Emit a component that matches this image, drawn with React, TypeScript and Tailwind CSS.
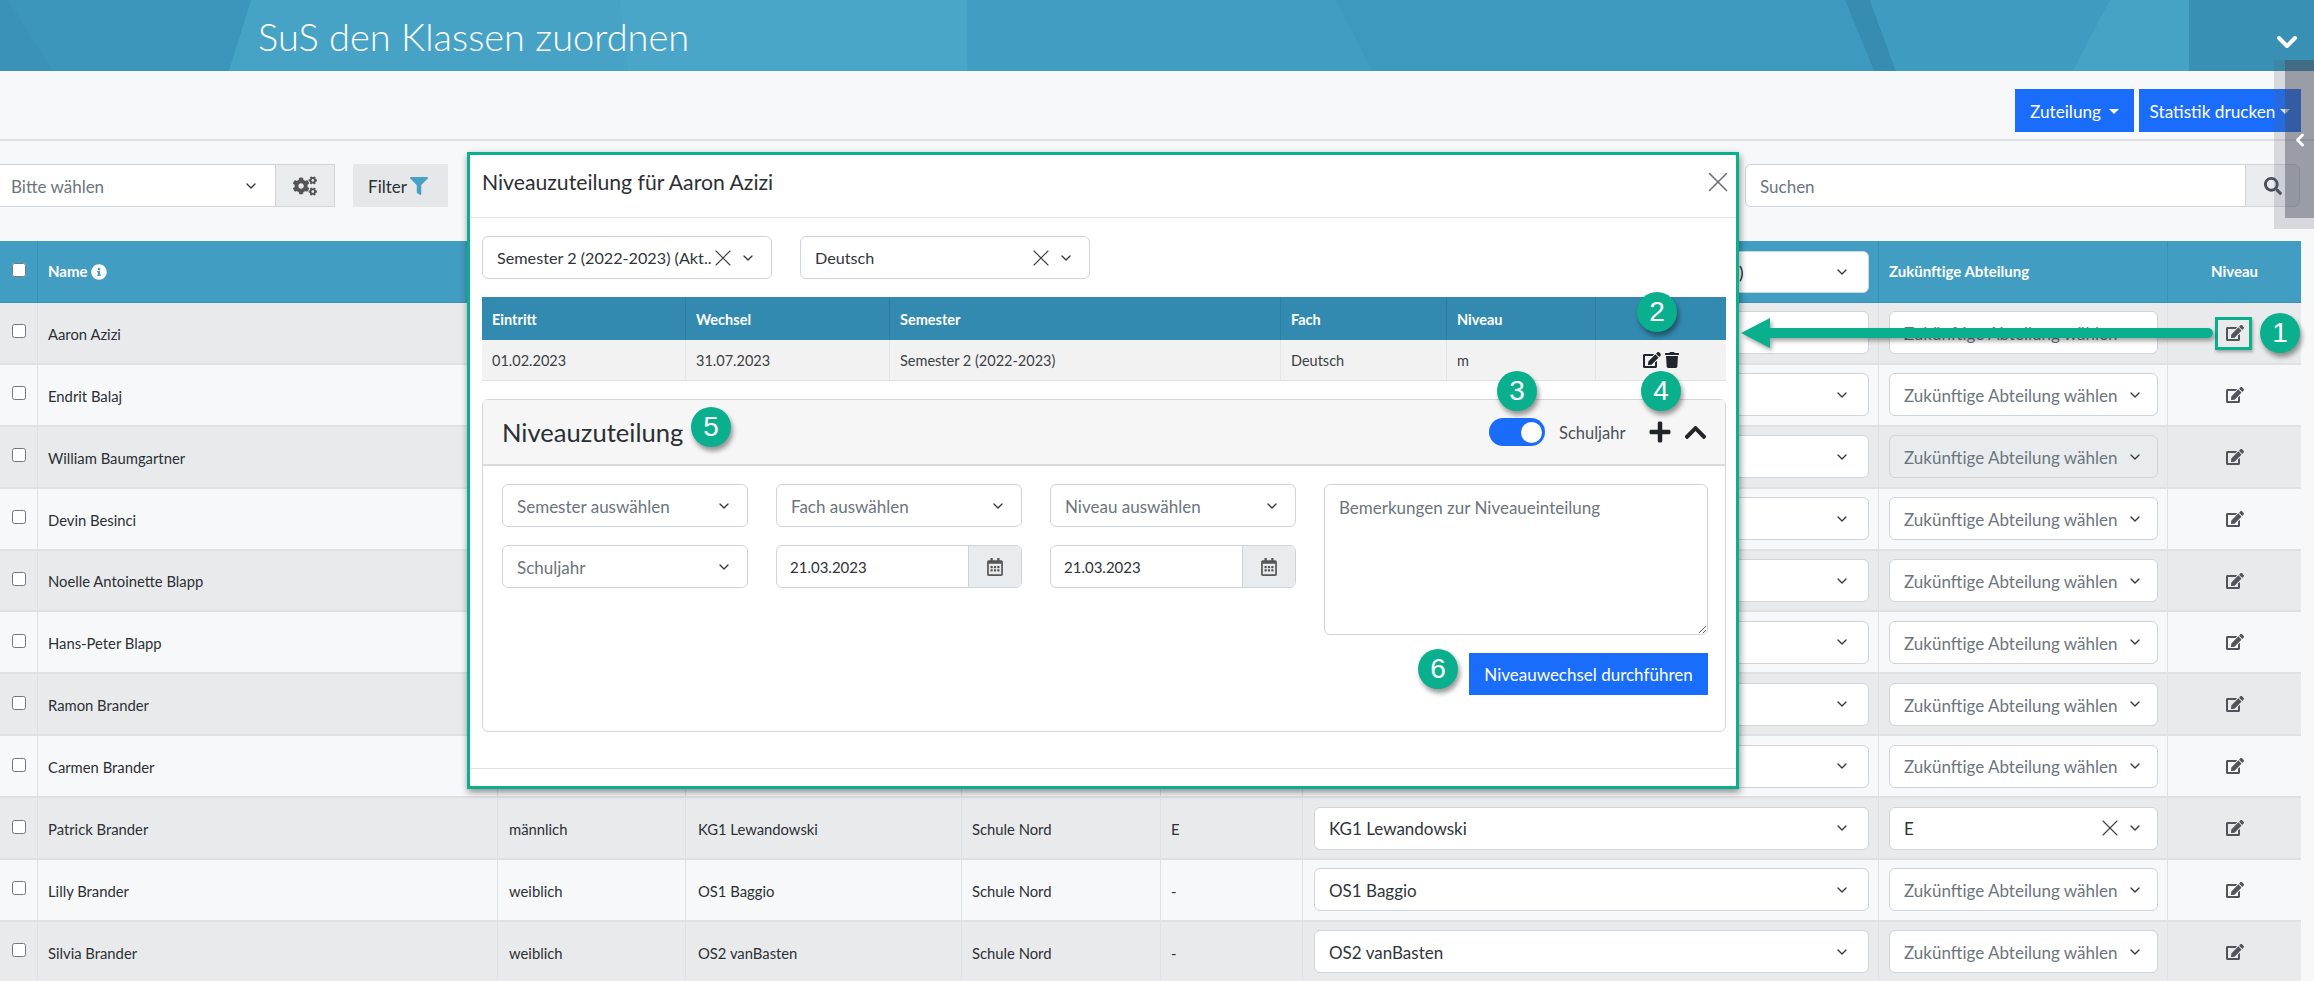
import { ChevronDown, ChevronLeft, X } from "lucide-react";
import {
  FaChevronUp,
  FaCogs,
  FaEdit,
  FaFilter,
  FaInfoCircle,
  FaPlus,
  FaRegCalendarAlt,
  FaSearch,
  FaTrash,
} from "react-icons/fa";

const rowGrid =
  "grid grid-cols-[38px_460px_188px_276px_199px_142px_576px_289px_133px]";

interface Student {
  name: string;
  gender?: string;
  klasse?: string;
  schule?: string;
  niveau?: string;
  pick?: string;
  abteilung?: string;
  locked?: boolean;
}

const students: Student[] = [
  { name: "Aaron Azizi" },
  { name: "Endrit Balaj" },
  { name: "William Baumgartner", locked: true },
  { name: "Devin Besinci" },
  { name: "Noelle Antoinette Blapp" },
  { name: "Hans-Peter Blapp" },
  { name: "Ramon Brander" },
  { name: "Carmen Brander" },
  {
    name: "Patrick Brander",
    gender: "männlich",
    klasse: "KG1 Lewandowski",
    schule: "Schule Nord",
    niveau: "E",
    pick: "KG1 Lewandowski",
    abteilung: "E",
  },
  {
    name: "Lilly Brander",
    gender: "weiblich",
    klasse: "OS1 Baggio",
    schule: "Schule Nord",
    niveau: "-",
    pick: "OS1 Baggio",
  },
  {
    name: "Silvia Brander",
    gender: "weiblich",
    klasse: "OS2 vanBasten",
    schule: "Schule Nord",
    niveau: "-",
    pick: "OS2 vanBasten",
  },
];

const SelectBox = ({
  text,
  placeholder,
  clear,
  disabled,
  compact,
  className,
}: {
  text?: string;
  placeholder?: boolean;
  clear?: boolean;
  disabled?: boolean;
  compact?: boolean;
  className: string;
}) => (
  <div
    className={`flex h-[43px] items-center rounded-[6px] border border-[#ced4da] pl-[14px] pr-[15px] ${
      compact ? "text-[16.2px]" : "text-[17px]"
    } ${disabled ? "bg-[#e9ecef]" : "bg-white"} ${className}`}
  >
    <span
      className={`min-w-0 flex-1 whitespace-nowrap pt-[2px] ${
        placeholder ? "text-[#6c757d]" : "text-[#30353a]"
      }`}
    >
      {text}
    </span>
    {clear && (
      <X className="-mx-[2px] mr-[3px] shrink-0 text-[#444]" size={28} strokeWidth={1} />
    )}
    <ChevronDown className="shrink-0 text-[#343a40]" size={16} strokeWidth={2} />
  </div>
);

const DateBox = ({ value }: { value: string }) => (
  <div className="flex h-[43px] overflow-hidden rounded-[6px] border border-[#ced4da] bg-white text-[15px] text-[#30353a]">
    <span className="flex flex-1 items-center pl-[13px] pt-[2px]">{value}</span>
    <span className="flex w-[53px] items-center justify-center border-l border-[#ced4da] bg-[#e9ecef] text-[#555]">
      <FaRegCalendarAlt size={18} />
    </span>
  </div>
);

const Badge = ({ n, className }: { n: number; className: string }) => (
  <div
    className={`absolute flex h-[40px] w-[40px] items-center justify-center rounded-full bg-[#0aaf8d] text-[28px] text-white shadow-[2px_4px_5px_rgba(0,0,0,0.4)] [font-family:'Liberation_Sans',Arial,sans-serif] ${className}`}
  >
    {n}
  </div>
);

const StudentRow = ({ s, index }: { s: Student; index: number }) => (
  <div
    className={`${rowGrid} h-[61.9px] border-b-2 border-[#dfe1e4] text-[14.8px] text-[#2b3035] ${
      index % 2 === 0 ? "bg-[#e9eaec]" : "bg-[#f7f8fa]"
    }`}
  >
    <div className="flex items-center justify-center border-r border-[#dee2e6] pb-[3px]">
      <input type="checkbox" className="h-[14px] w-[14px]" />
    </div>
    <div className="flex items-center border-r border-[#dee2e6] pl-[10px] pt-[2px]">{s.name}</div>
    <div className="flex items-center border-r border-[#dee2e6] pl-[11px] pt-[2px]">{s.gender}</div>
    <div className="flex items-center border-r border-[#dee2e6] pl-[12px] pt-[2px]">{s.klasse}</div>
    <div className="flex items-center border-r border-[#dee2e6] pl-[10px] pt-[2px]">{s.schule}</div>
    <div className="flex items-center border-r border-[#dee2e6] pl-[10px] pt-[2px]">{s.niveau}</div>
    <div className="flex items-center border-r border-[#dee2e6] pl-[11px]">
      <SelectBox text={s.pick} className="w-[555px] pr-[18px]!" />
    </div>
    <div className="flex items-center border-r border-[#dee2e6] pl-[10px]">
      <SelectBox
        text={s.abteilung ?? "Zukünftige Abteilung wählen"}
        placeholder={!s.abteilung}
        clear={!!s.abteilung}
        disabled={s.locked}
        className="w-[269px] pr-[14px]!"
      />
    </div>
    <div className="flex items-center justify-center text-[#50555c]">
      <FaEdit size={18} />
    </div>
  </div>
);

const Modal = () => (
  <div className="absolute left-[467px] top-[152px] flex h-[637px] w-[1272px] flex-col border-[3px] border-[#0aaf8d] bg-white shadow-[1px_3px_7px_rgba(0,0,0,0.45)]">
    <div className="flex h-[63px] shrink-0 items-center justify-between border-b border-[#dee2e6] pl-[12px] pr-[1px]">
      <h2 className="mb-[6px] text-[21.2px] text-[#2b3035]">Niveauzuteilung für Aaron Azizi</h2>
      <X className="mb-[8px] text-[#6b6f74]" size={34} strokeWidth={1.1} />
    </div>

    <div className="flex-1 px-[12px] pt-[18px]">
      <div className="flex gap-[28px]">
        <SelectBox text="Semester 2 (2022-2023) (Akt.." clear compact className="w-[290px]" />
        <SelectBox text="Deutsch" clear compact className="w-[290px]" />
      </div>

      <div className="mt-[18px] w-[1244px] text-[14.5px]">
        <div className="grid h-[43px] grid-cols-[204px_204px_391px_166px_149px_130px] items-stretch bg-[#338ab0] font-bold text-white">
          {["Eintritt", "Wechsel", "Semester", "Fach", "Niveau", ""].map((h, i) => (
            <div key={i} className="flex items-center border-r border-[#2d7ea2] pl-[10px] pt-[2px] last:border-r-0">
              {h}
            </div>
          ))}
        </div>
        <div className="grid h-[41px] grid-cols-[204px_204px_391px_166px_149px_130px] items-stretch border-b border-[#dee2e6] bg-[#f2f2f2] text-[#3c4146]">
          {["01.02.2023", "31.07.2023", "Semester 2 (2022-2023)", "Deutsch", "m"].map((c) => (
            <div key={c} className="flex items-center border-r border-[#e2e4e7] pl-[10px] pt-[2px]">
              {c}
            </div>
          ))}
          <div className="flex items-center justify-center gap-[3px] text-[#22262a]">
            <FaEdit size={18} />
            <FaTrash size={16} />
          </div>
        </div>
      </div>

      <div className="mt-[18px] h-[333px] w-[1244px] rounded-[6px] border border-[#d3d5d8]">
        <div className="flex h-[66px] items-center border-b-2 border-[#d9dadc] bg-[#f6f6f6] pl-[19px] pr-[17px]">
          <h3 className="text-[25.6px] text-[#2b3035]">Niveauzuteilung</h3>
          <div className="ml-auto flex h-[28px] w-[56px] items-center justify-end rounded-full bg-[#1a6dfb] pr-[3px]">
            <div className="h-[21px] w-[21px] rounded-full bg-white" />
          </div>
          <span className="ml-[14px] w-[67px] whitespace-nowrap pt-[2px] text-[16.5px] text-[#495057]">Schuljahr</span>
          <FaPlus className="ml-[22px] text-[#212529]" size={24} />
          <FaChevronUp className="ml-[11px] text-[#212529]" size={25} />
        </div>
        <div className="flex gap-[28px] pl-[19px] pt-[18px]">
          <div className="grid w-[794px] grid-cols-3 content-start gap-x-[28px] gap-y-[18px]">
            <SelectBox text="Semester auswählen" placeholder className="w-full" />
            <SelectBox text="Fach auswählen" placeholder className="w-full" />
            <SelectBox text="Niveau auswählen" placeholder className="w-full" />
            <SelectBox text="Schuljahr" placeholder className="w-full" />
            <DateBox value="21.03.2023" />
            <DateBox value="21.03.2023" />
          </div>
          <div className="w-[384px]">
            <textarea
              placeholder="Bemerkungen zur Niveaueinteilung"
              className="block h-[151px] w-full rounded-[6px] border border-[#ced4da] bg-white px-[14px] pb-[8px] pt-[10px] text-[17px] placeholder:text-[#6c757d]"
            />
            <div className="mt-[18px] flex justify-end">
              <button className="h-[42px] w-[239px] bg-[#1a6dfb] pt-[2px] text-[17px] text-white">
                Niveauwechsel durchführen
              </button>
            </div>
          </div>
        </div>
      </div>
    </div>

    <div className="h-[18px] shrink-0 border-t border-[#dee2e6]" />
  </div>
);

export default function App() {
  return (
    <div className="relative h-[981px] w-[2314px] overflow-hidden bg-[#f7f8fa] [font-family:Lato,sans-serif]">
      <header className="relative flex h-[71px] items-center overflow-hidden bg-[#47a3c6] pl-[258px]">
        <svg className="absolute left-0 top-0 h-full w-full" viewBox="0 0 2314 71" preserveAspectRatio="none">
          <polygon points="0,0 251,0 229,71 0,71" fill="#3c96bc" />
          <polygon points="0,0 8,0 53,71 0,71" fill="#3a92b8" />
          <polygon points="620,0 967,0 967,71 628,71" fill="#4aa6c8" />
          <polygon points="967,0 1336,0 1372,71 967,71" fill="#429dc2" />
          <polygon points="1336,0 1845,0 1874,71 1372,71" fill="#3d99bf" />
          <polygon points="1845,0 1870,0 1896,71 1874,71" fill="#378dB1" />
          <polygon points="1870,0 2110,0 2073,71 1896,71" fill="#3f9bc0" />
          <polygon points="2110,0 2189,0 2189,71 2073,71" fill="#47a3c6" />
          <polygon points="2189,0 2314,0 2314,71 2189,71" fill="#3890b5" />
        </svg>
        <h1 className="relative pt-[2px] text-[38px] font-light text-white">SuS den Klassen zuordnen</h1>
        <ChevronDown className="absolute left-[2271px] top-[26px] text-white" size={32} strokeWidth={3} />
      </header>

      <div className="flex h-[70px] justify-end gap-[5px] border-b-2 border-[#dfe1e5] pr-[13px] pt-[18px]">
        <button className="flex h-[43px] w-[119px] items-center justify-center gap-[8px] bg-[#1a6dfb] pt-[2px] text-[17.2px] text-white">
          Zuteilung
          <span className="border-x-[5px] border-t-[5px] border-x-transparent border-t-white" />
        </button>
        <button className="flex h-[43px] w-[162px] items-center justify-center gap-[5px] bg-[#1a6dfb] pt-[2px] text-[17.2px] text-white">
          Statistik drucken
          <span className="border-x-[5px] border-t-[5px] border-x-transparent border-t-white" />
        </button>
      </div>

      <div className="mt-[23px] flex h-[43px] w-[2300px] items-stretch">
        <div className="flex w-[275px] items-center border-y border-[#ced4da] bg-white pl-[11px] pr-[16px] text-[17px] text-[#6c757d]">
          <span className="flex-1 pt-[2px]">Bitte wählen</span>
          <ChevronDown className="text-[#343a40]" size={16} strokeWidth={2} />
        </div>
        <div className="flex w-[60px] items-center justify-center border border-[#ced4da] bg-[#e9ecef] text-[#555]">
          <FaCogs size={24} />
        </div>
        <div className="ml-[18px] flex w-[95px] items-center justify-center gap-[3px] bg-[#e6e7e9] pr-[5px] text-[17px] text-[#2b3035]">
          <span className="pt-[2px]">Filter</span>
          <FaFilter className="text-[#47a1c5]" size={18} />
        </div>
        <div className="ml-auto flex w-[555px] overflow-hidden rounded-[6px] border border-[#ced4da] bg-white text-[17px] text-[#6c757d]">
          <span className="flex flex-1 items-center pl-[14px] pt-[2px]">Suchen</span>
          <span className="flex w-[54px] items-center justify-center border-l border-[#ced4da] bg-[#e9ecef] text-[#495057]">
            <FaSearch size={18} />
          </span>
        </div>
      </div>

      <div className="mt-[34px] w-[2301px]">
        <div className={`${rowGrid} h-[62px] border-b border-[#3a8fb3] bg-[#429dc2] text-[15px] font-bold text-white`}>
          <div className="flex items-center justify-center border-r border-[#3a8fb3] pb-[4px]">
            <input type="checkbox" className="h-[14px] w-[14px]" />
          </div>
          <div className="flex items-center gap-[3px] pl-[10px]">
            Name
            <FaInfoCircle size={16} />
          </div>
          <div />
          <div />
          <div />
          <div />
          <div className="flex items-center border-r border-[#3a8fb3] pl-[11px]">
            <div className="flex h-[42px] w-[555px] items-center rounded-[6px] border border-[#ced4da] bg-white pr-[18px] text-[17px] font-normal text-[#212529]">
              <span className="ml-[424px] flex-1 pt-[2px]">)</span>
              <ChevronDown className="text-[#343a40]" size={16} strokeWidth={2} />
            </div>
          </div>
          <div className="flex items-center border-r border-[#3a8fb3] pl-[10px]">Zukünftige Abteilung</div>
          <div className="flex items-center justify-center">Niveau</div>
        </div>
        {students.map((s, i) => (
          <StudentRow key={s.name} s={s} index={i} />
        ))}
      </div>

      <Modal />

      {/* annotations over the screenshot */}
      <div className="absolute left-[2215px] top-[317px] h-[33px] w-[37px] border-[3px] border-[#0aaf8d] shadow-[1px_2px_3px_rgba(0,0,0,0.3)]" />
      <svg
        className="absolute left-[1738px] top-[315px] drop-shadow-[2px_3px_2px_rgba(0,0,0,0.35)]"
        width="480"
        height="40"
        viewBox="0 0 480 40"
      >
        <polygon points="3,18 32,3 32,33" fill="#0aaf8d" />
        <line x1="30" y1="18" x2="470" y2="18" stroke="#0aaf8d" strokeWidth="10" strokeLinecap="round" />
      </svg>
      <Badge n={1} className="left-[2260px] top-[313px]" />
      <Badge n={2} className="left-[1637px] top-[292px]" />
      <Badge n={3} className="left-[1497px] top-[371px]" />
      <Badge n={4} className="left-[1641px] top-[371px]" />
      <Badge n={5} className="left-[691px] top-[407px]" />
      <Badge n={6} className="left-[1418px] top-[649px]" />

      {/* collapsed side panel handle */}
      <div className="absolute left-[2274px] top-[60px] h-[169px] w-[40px] bg-[rgba(90,95,110,0.2)]" />
      <div className="absolute left-[2285px] top-[60px] flex h-[158px] w-[29px] items-center justify-center bg-[rgba(70,75,85,0.42)] pt-[2px] text-white">
        <ChevronLeft className="ml-[1px]" size={20} strokeWidth={3.5} />
      </div>
    </div>
  );
}
